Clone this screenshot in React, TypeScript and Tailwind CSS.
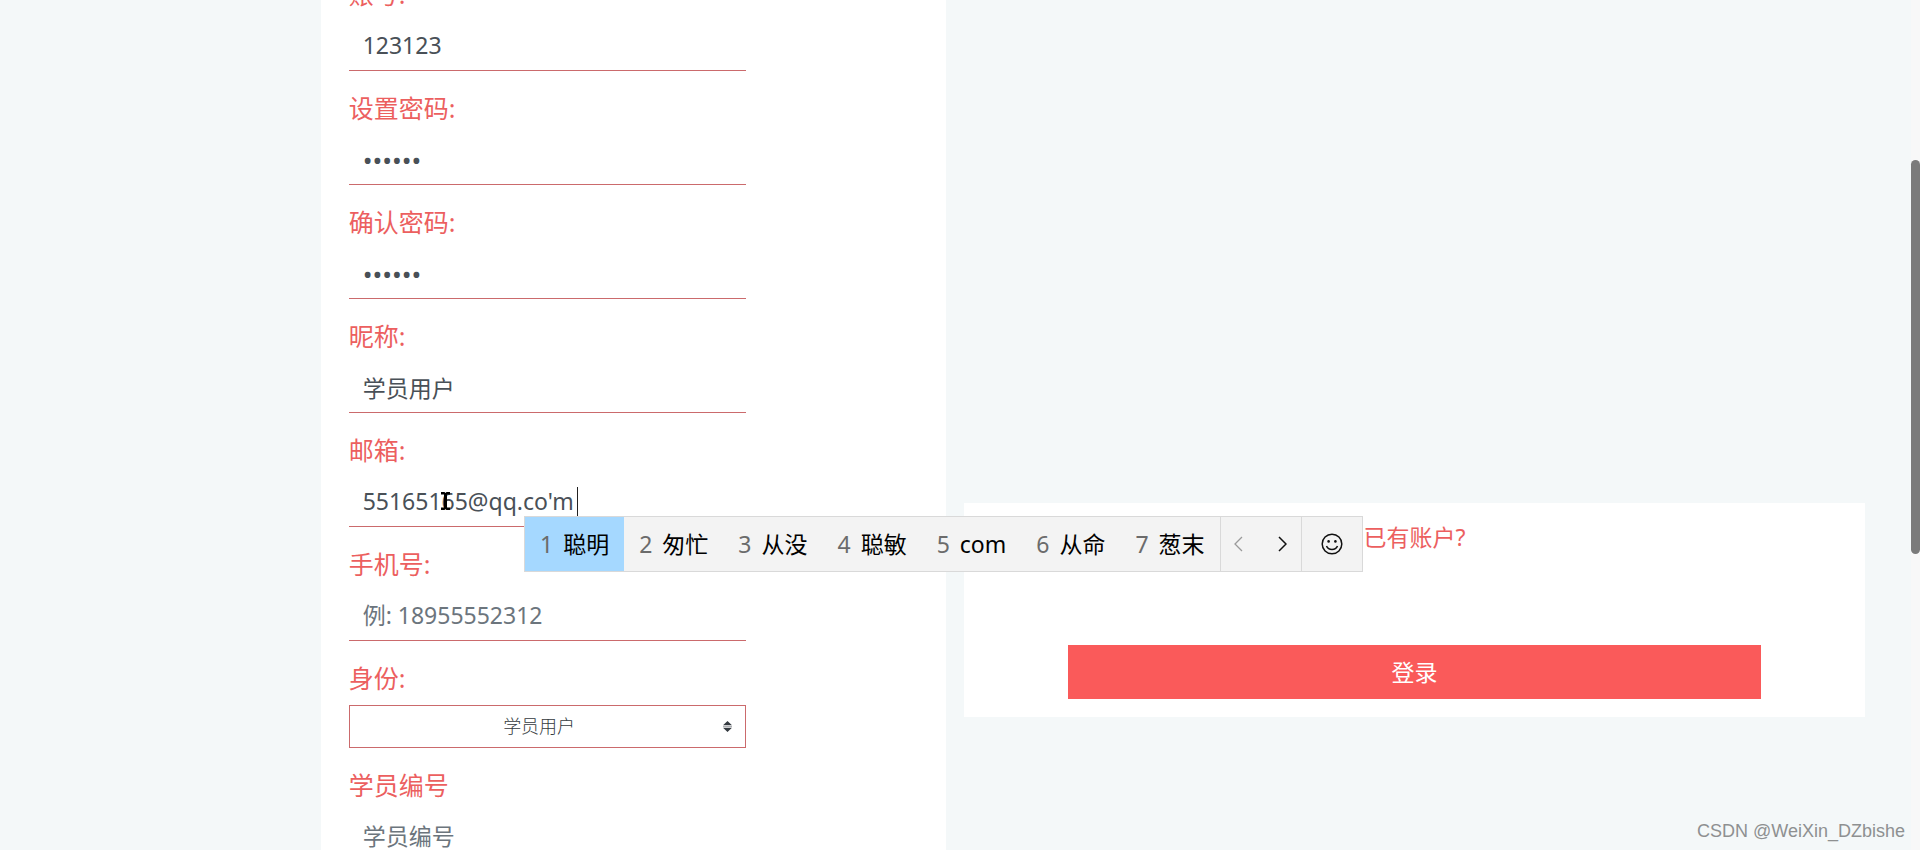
const labelClass = 'mb-[10px] block text-[25px] leading-[34px] text-[#ec5f5f]';

const fields = [
  { id: 'account', label: '账号:', type: 'text', value: '123123' },
  { id: 'password', label: '设置密码:', type: 'password', value: '123456' },
  { id: 'confirm', label: '确认密码:', type: 'password', value: '123456' },
  { id: 'nickname', label: '昵称:', type: 'text', value: '学员用户' },
  { id: 'email', label: '邮箱:', type: 'text', value: "55165165@qq.co'm" },
  { id: 'phone', label: '手机号:', type: 'text', placeholder: '例: 18955552312' },
];

const candidates = ['聪明', '匆忙', '从没', '聪敏', 'com', '从命', '葱末'];

function Field({
  id,
  label,
  type = 'text',
  value,
  placeholder,
}: {
  id: string;
  label: string;
  type?: string;
  value?: string;
  placeholder?: string;
}) {
  const size = type === 'password' ? 'text-[26px]' : 'pb-px text-[23px]';
  return (
    <div className="mb-5">
      <label htmlFor={id} className={labelClass}>
        {label}
      </label>
      <div className="relative w-[397px] max-w-full">
        <input
          id={id}
          type={type}
          defaultValue={value}
          placeholder={placeholder}
          className={`block h-[50px] w-full border-b border-[#cb6a6c] bg-transparent px-[14px] text-[#495057] outline-none placeholder:text-[#6c757d] ${size}`}
        />
        {id === 'email' && <Composition />}
      </div>
    </div>
  );
}

// underline of the text being composed, the caret and the mouse pointer
function Composition() {
  return (
    <div className="pointer-events-none absolute inset-0">
      <div className="absolute left-[178px] top-[10px] h-[30px] w-[51px] border-b border-r border-r-[#222] border-b-[#495057] [border-bottom-style:dotted]" />
      <svg className="absolute left-[92px] top-[15px]" width="9" height="18" viewBox="0 0 9 18">
        <path d="M0 0H3.5L4.5 1L5.5 0H9V2.5H6V15.5H9V18H5.5L4.5 17L3.5 18H0V15.5H3V2.5H0Z" fill="#000" />
      </svg>
    </div>
  );
}

function ImeBar() {
  return (
    <div className="absolute left-[524px] top-[516px] flex h-14 border border-[#d9d9d9] bg-[#f3f3f3] text-[23px] text-black">
      {candidates.map((word, i) => (
        <button
          key={word}
          className={`flex items-center gap-[10px] px-[15px] ${i === 0 ? 'bg-[#a5d8ff]' : ''}`}
        >
          <span className="text-[#6b6b6b]">{i + 1}</span>
          <span>{word}</span>
        </button>
      ))}
      <div className="flex border-l border-[#d9d9d9]">
        <button aria-label="上一页" className="flex w-9 items-center justify-center">
          <svg width="9" height="16" viewBox="0 0 9 16" fill="none" stroke="#9a9a9a" strokeWidth="1.3">
            <path d="M8 1L1 8L8 15" />
          </svg>
        </button>
        <button aria-label="下一页" className="flex w-11 items-center justify-center pl-2">
          <svg width="9" height="16" viewBox="0 0 9 16" fill="none" stroke="#111" strokeWidth="1.5">
            <path d="M1 1L8 8L1 15" />
          </svg>
        </button>
      </div>
      <button aria-label="表情" className="flex w-[61px] items-center justify-center border-l border-[#d9d9d9]">
        <svg width="22" height="22" viewBox="0 0 22 22" fill="none" stroke="#111" strokeWidth="1.5">
          <circle cx="11" cy="11" r="9.8" />
          <circle cx="7.6" cy="8.4" r="1.3" fill="#111" stroke="none" />
          <circle cx="14.4" cy="8.4" r="1.3" fill="#111" stroke="none" />
          <path d="M5.5 13C7.5 17.6 14.5 17.6 16.5 13" />
        </svg>
      </button>
    </div>
  );
}

export default function App() {
  return (
    <div className="relative flex h-screen overflow-hidden bg-[#f4f8f9] font-['Noto_Sans','Noto_Sans_CJK_SC',sans-serif]">
      <main className="-mt-[23px] grid flex-1 grid-cols-[40.5%_1fr] items-start gap-[18px] pl-[16.7%] pr-[46px]">
        <form className="bg-white px-7 pb-10">
          {fields.map((f) => (
            <Field key={f.id} {...f} />
          ))}
          <div className="mb-5">
            <label htmlFor="role" className={labelClass}>
              身份:
            </label>
            <div className="relative w-[397px] max-w-full">
              <select
                id="role"
                className="block h-[43px] w-full appearance-none border border-[#cb6a6c] bg-white pl-[14px] pr-[30px] text-center text-[18px] font-light text-[#343a40]"
              >
                <option>学员用户</option>
              </select>
              <svg
                className="pointer-events-none absolute right-[14px] top-4"
                width="9"
                height="11"
                viewBox="0 0 9 11"
                fill="#343a40"
              >
                <path d="M0 4.2L4.5 0L9 4.2ZM0 6.8H9L4.5 11Z" />
                <path d="M0 5H9V6H0Z" fillOpacity=".4" />
              </svg>
            </div>
          </div>
          <Field id="number" label="学员编号" placeholder="学员编号" />
        </form>
        <section className="mt-[526px] h-[214px] bg-white pt-4 text-center text-[23px]">
          <p className="leading-9 text-[#ec5f5f]">已有账户?</p>
          <button className="mt-[90px] h-[54px] w-[77%] bg-[#fa5a5a] text-white">登录</button>
        </section>
      </main>
      <div className="w-[9px] bg-[#f8f8f8]">
        <div className="mt-40 h-[394px] rounded-full bg-[#7b7b7b]" />
      </div>
      <ImeBar />
      <p className="absolute bottom-[5px] right-[15px] font-['Liberation_Sans',sans-serif] text-[18px] text-[#8e9091]">
        CSDN @WeiXin_DZbishe
      </p>
    </div>
  );
}
